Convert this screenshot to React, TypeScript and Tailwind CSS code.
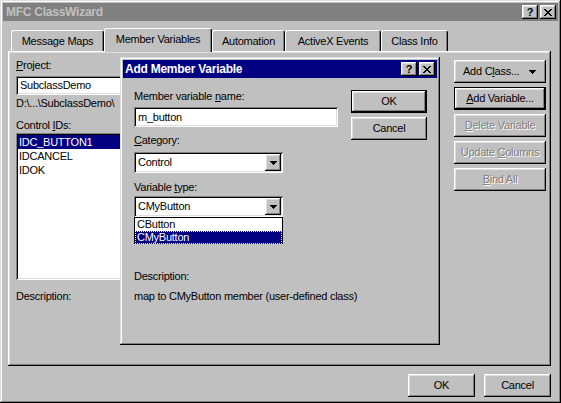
import React from "react";

const RAISED =
  "shadow-[inset_-1px_-1px_#000,inset_1px_1px_#fff,inset_-2px_-2px_#808080,inset_2px_2px_#dfdfdf]";
const SUNKEN =
  "shadow-[inset_1px_1px_#808080,inset_-1px_-1px_#fff,inset_2px_2px_#000,inset_-2px_-2px_#dfdfdf]";

function U({ c }: { c: string }) {
  return <span className="underline underline-offset-[1px] decoration-1">{c}</span>;
}

function CloseGlyph() {
  return (
    <svg width="8" height="7" viewBox="0 0 8 7" shapeRendering="crispEdges">
      <path
        fill="#000"
        d="M0 0h2v1H0z M6 0h2v1H6z M1 1h2v1H1z M5 1h2v1H5z M2 2h4v1H2z M3 3h2v1H3z M2 4h4v1H2z M1 5h2v1H1z M5 5h2v1H5z M0 6h2v1H0z M6 6h2v1H6z"
      />
    </svg>
  );
}

function DownTri() {
  return (
    <svg width="7" height="4" viewBox="0 0 7 4" shapeRendering="crispEdges">
      <path fill="#000" d="M0 0h7v1H0z M1 1h5v1H1z M2 2h3v1H2z M3 3h1v1H3z" />
    </svg>
  );
}

function TitleButtons() {
  return (
    <div className="flex gap-[2px]">
      <div className={`w-[16px] h-[14px] bg-[#c0c0c0] ${RAISED} flex items-center justify-center text-[11px] leading-none font-bold text-black tracking-normal`}>
        ?
      </div>
      <div className={`w-[16px] h-[14px] bg-[#c0c0c0] ${RAISED} flex items-center justify-center`}>
        <CloseGlyph />
      </div>
    </div>
  );
}

function Btn({
  children,
  w,
  def,
  disabled,
}: {
  children: React.ReactNode;
  w: string;
  def?: boolean;
  disabled?: boolean;
}) {
  return (
    <div className={`${w} h-[23px] bg-[#c0c0c0] ${def ? "border border-black" : ""}`}>
      <div
        className={`w-full h-full ${RAISED} flex items-center justify-center text-[11px] leading-[13px] ${
          disabled ? "text-[#808080] [text-shadow:1px_1px_0_#fff]" : "text-black"
        }`}
      >
        <span className="whitespace-pre">{children}</span>
      </div>
    </div>
  );
}

function Combo({ value }: { value: string }) {
  return (
    <div className={`w-[149px] h-[21px] bg-white ${SUNKEN} flex items-center p-[2px]`}>
      <div className="flex-1 pl-[2px] text-[11px] leading-[13px]">{value}</div>
      <div className={`w-[16px] h-[17px] bg-[#c0c0c0] ${RAISED} flex items-center justify-center`}>
        <DownTri />
      </div>
    </div>
  );
}

function Tab({ label, w, selected }: { label: string; w: string; selected?: boolean }) {
  return (
    <div
      className={`${w} ${
        selected ? "h-[24px] -mb-[1px] relative z-10 pb-[2px]" : "h-[21px]"
      } bg-[#c0c0c0] border-t border-l border-white border-r border-r-black rounded-t-[3px] shadow-[inset_-1px_0_#808080] flex items-center justify-center text-[11px] leading-[13px]`}
    >
      {label}
    </div>
  );
}

export default function App() {
  return (
    <div className="font-['Liberation_Sans',Arial,sans-serif] text-black tracking-[-0.25px]">
      <div
        className={`relative w-[561px] h-[403px] bg-[#c0c0c0] shadow-[inset_-1px_-1px_#000,inset_1px_1px_#dfdfdf,inset_-2px_-2px_#808080,inset_2px_2px_#fff] pt-[3px] px-[3px] flex flex-col`}
      >
        {/* Title bar */}
        <div className="h-[18px] bg-[#808080] flex items-center justify-between pl-[3px] pr-[2px]">
          <span className="text-[12px] font-bold text-[#c0c0c0] leading-none">MFC ClassWizard</span>
          <TitleButtons />
        </div>

        {/* Tabs */}
        <div className="h-[30px] flex items-end pl-[8px]">
          <Tab label="Message Maps" w="w-[93px]" />
          <Tab label="Member Variables" w="w-[108px]" selected />
          <Tab label="Automation" w="w-[73px]" />
          <Tab label="ActiveX Events" w="w-[96px]" />
          <Tab label="Class Info" w="w-[67px]" />
        </div>

        {/* Panel */}
        <div className={`ml-[5px] w-[543px] h-[315px] bg-[#c0c0c0] ${RAISED} flex justify-between`}>
          <div className="pl-[8px] pt-[8px] flex flex-col text-[11px] leading-[13px]">
            <div>
              <U c="P" />
              roject:
            </div>
            <div className={`mt-[4px] w-[150px] h-[19px] bg-white ${SUNKEN} flex items-center pl-[4px]`}>
              SubclassDemo
            </div>
            <div className="mt-[2px] whitespace-nowrap">D:\...\SubclassDemo\</div>
            <div className="mt-[9px]">
              Control <U c="I" />
              Ds:
            </div>
            <div className={`mt-[1px] w-[150px] h-[147px] bg-white ${SUNKEN} p-[2px] flex flex-col`}>
              <div className="h-[14px] bg-[#000080] text-white pl-[1px] flex items-center">IDC_BUTTON1</div>
              <div className="h-[14px] pl-[1px] flex items-center">IDCANCEL</div>
              <div className="h-[14px] pl-[1px] flex items-center">IDOK</div>
            </div>
            <div className="mt-[10px]">Description:</div>
          </div>

          <div className="pr-[5px] pt-[9px] flex flex-col gap-[4px]">
            <div className="w-[92px] h-[23px] bg-[#c0c0c0]">
              <div className={`w-full h-full ${RAISED} flex items-center justify-between pl-[9px] pr-[10px] text-[11px] leading-[13px]`}>
                <span>
                  Add C<U c="l" />
                  ass...
                </span>
                <DownTri />
              </div>
            </div>
            <Btn w="w-[92px]" def>
              <U c="A" />
              dd Variable...
            </Btn>
            <Btn w="w-[92px]" disabled>
              <U c="D" />
              elete Variable
            </Btn>
            <Btn w="w-[92px]" disabled>
              Update <U c="C" />
              olumns
            </Btn>
            <Btn w="w-[92px]" disabled>
              <U c="B" />
              ind All
            </Btn>
          </div>
        </div>

        {/* Bottom buttons */}
        <div className="mt-[8px] flex justify-end gap-[9px] pr-[7px]">
          <Btn w="w-[67px]">OK</Btn>
          <Btn w="w-[67px]">Cancel</Btn>
        </div>

        {/* Add Member Variable dialog */}
        <div
          className={`absolute left-[120px] top-[57px] w-[320px] h-[288px] z-20 bg-[#c0c0c0] shadow-[inset_-1px_-1px_#000,inset_1px_1px_#dfdfdf,inset_-2px_-2px_#808080,inset_2px_2px_#fff] pt-[3px] px-[3px] flex flex-col`}
        >
          <div className="h-[18px] bg-[#000080] flex items-center justify-between pl-[2px] pr-[2px]">
            <span className="text-[12px] font-bold text-white leading-none">Add Member Variable</span>
            <TitleButtons />
          </div>
          <div className="flex text-[11px] leading-[13px]">
            <div className="w-[228px] pl-[11px] flex flex-col">
              <div className="mt-[12px]">
                Member variable <U c="n" />
                ame:
              </div>
              <div className={`mt-[4px] w-[204px] h-[20px] bg-white ${SUNKEN} flex items-center pl-[4px]`}>
                m_button
              </div>
              <div className="mt-[7px]">
                <U c="C" />
                ategory:
              </div>
              <div className="mt-[5px]">
                <Combo value="Control" />
              </div>
              <div className="mt-[8px]">
                Variable <U c="t" />
                ype:
              </div>
              <div className="mt-[2px]">
                <Combo value="CMyButton" />
              </div>
              <div className="w-[149px] h-[27px] bg-white border border-black flex flex-col">
                <div className="h-[13px] pl-[2px] flex items-center">CButton</div>
                <div className="h-[13px] pl-[1px] bg-[#000080] text-white border border-dotted border-[#ffffa0] flex items-center">
                  CMyButton
                </div>
              </div>
              <div className="mt-[26px]">Description:</div>
              <div className="mt-[7px] whitespace-nowrap">map to CMyButton member (user-defined class)</div>
            </div>
            <div className="pt-[12px] flex flex-col gap-[4px]">
              <Btn w="w-[76px]" def>
                OK
              </Btn>
              <Btn w="w-[76px]">Cancel</Btn>
            </div>
          </div>
        </div>
      </div>
    </div>
  );
}
